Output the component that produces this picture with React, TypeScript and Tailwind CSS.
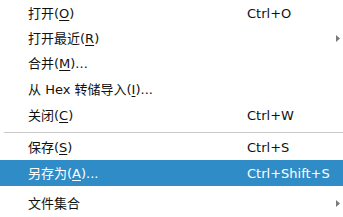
import React from "react";

type Item = { label: React.ReactNode; shortcut?: string; sub?: boolean; active?: boolean };

const U = ({ c }: { c: string }) => <span className="underline underline-offset-2">{c}</span>;

const Arrow = ({ active }: { active?: boolean }) => (
  <svg width="4" height="7" viewBox="0 0 4 7" className="mr-[3px]">
    <path d="M0 0 L4 3.5 L0 7 Z" fill={active ? "#fff" : "#7a7a7a"} />
  </svg>
);

function Row({ item, h }: { item: Item; h: string }) {
  return (
    <div
      className={`flex items-center pl-[28px] ${h} ${item.active ? "bg-[#308cc6] text-white" : "text-[#111]"}`}
    >
      <div className="w-[219px] whitespace-nowrap">{item.label}</div>
      <div className="flex-1 whitespace-nowrap">{item.shortcut}</div>
      {item.sub ? <Arrow active={item.active} /> : null}
    </div>
  );
}

export default function App() {
  return (
    <div
      className="w-[343px] h-[217px] bg-white overflow-hidden text-[13px] leading-none"
      style={{ fontFamily: '"DejaVu Sans", "Noto Sans CJK SC", sans-serif' }}
    >
      <Row h="h-[26px]" item={{ label: <>打开(<U c="O" />)</>, shortcut: "Ctrl+O" }} />
      <Row h="h-[25px]" item={{ label: <>打开最近(<U c="R" />)</>, sub: true }} />
      <Row h="h-[25px]" item={{ label: <>合并(<U c="M" />)...</> }} />
      <Row h="h-[26px]" item={{ label: <>从 Hex 转储导入(<U c="I" />)...</> }} />
      <Row h="h-[27px]" item={{ label: <>关闭(<U c="C" />)</>, shortcut: "Ctrl+W" }} />
      <div className="h-[6px] flex items-center pl-[4px]">
        <div className="h-px w-full bg-[#c8c8c8]" />
      </div>
      <Row h="h-[25px]" item={{ label: <>保存(<U c="S" />)</>, shortcut: "Ctrl+S" }} />
      <Row h="h-[26px]" item={{ label: <>另存为(<U c="A" />)...</>, shortcut: "Ctrl+Shift+S", active: true }} />
      <Row h="h-[34px]" item={{ label: <>文件集合</>, sub: true }} />
    </div>
  );
}
